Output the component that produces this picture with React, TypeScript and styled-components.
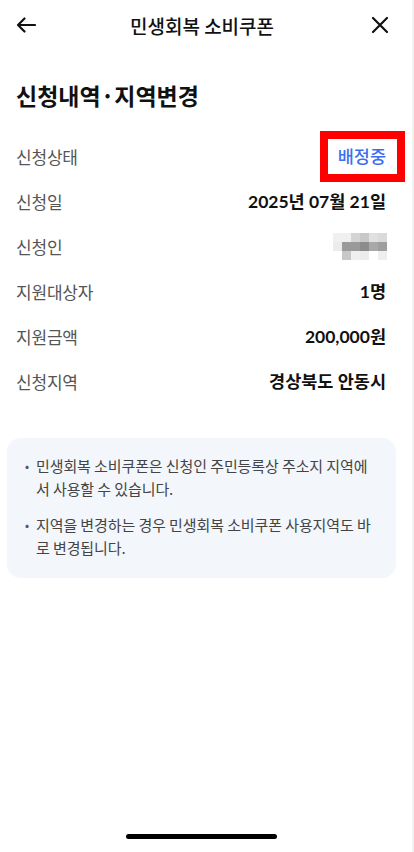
import styled, { createGlobalStyle } from 'styled-components';

const GlobalStyle = createGlobalStyle`
  html, body {
    margin: 0;
    padding: 0;
    background: #fff;
  }
  body {
    font-family: Lato, "Noto Sans CJK KR", sans-serif;
    color: #111;
  }
`;

const rows = [
  { label: '신청상태', value: '배정중', status: true },
  { label: '신청일', value: '2025년 07월 21일' },
  { label: '신청인', value: '', masked: true },
  { label: '지원대상자', value: '1명' },
  { label: '지원금액', value: '200,000원' },
  { label: '신청지역', value: '경상북도 안동시' },
];

const mosaic = [
  ['#f0f0f0', '#f0f0f0', '#d4d4d4', '#c8c8c8', '#e0e0e0', '#dadada'],
  ['#ececec', '#9a9a9a', '#9a9a9a', '#8c8c8c', '#a8a8a8', '#9e9e9e'],
  ['#ffffff', '#c8c8c8', '#f0f0f0', '#ececec', '#ffffff', '#eeeeee'],
];

const notices = [
  '민생회복 소비쿠폰은 신청인 주민등록상 주소지 지역에서 사용할 수 있습니다.',
  '지역을 변경하는 경우 민생회복 소비쿠폰 사용지역도 바로 변경됩니다.',
];

export default function App() {
  return (
    <Page>
      <GlobalStyle />
      <Header>
        <IconButton aria-label="뒤로">
          <svg width="20" height="16" viewBox="0 0 20 16" fill="none">
            <path d="M19 8H2M8.5 1.5L2 8l6.5 6.5" stroke="#111" strokeWidth="2.2" strokeLinecap="round" strokeLinejoin="round" />
          </svg>
        </IconButton>
        <Title>민생회복 소비쿠폰</Title>
        <IconButton aria-label="닫기">
          <svg width="18" height="18" viewBox="0 0 18 18" fill="none">
            <path d="M2 2l14 14M16 2L2 16" stroke="#111" strokeWidth="2.2" strokeLinecap="round" />
          </svg>
        </IconButton>
      </Header>

      <Heading>신청내역·지역변경</Heading>

      <List>
        {rows.map((r) => (
          <Row key={r.label}>
            <Label>{r.label}</Label>
            {r.status ? (
              <Status>{r.value}</Status>
            ) : r.masked ? (
              <Mosaic>
                {mosaic.flat().map((c, i) => (
                  <Cell key={i} $c={c} />
                ))}
              </Mosaic>
            ) : (
              <Value>{r.value}</Value>
            )}
          </Row>
        ))}
      </List>

      <NoticeBox>
        {notices.map((n) => (
          <Notice key={n}>{n}</Notice>
        ))}
      </NoticeBox>

      <HomeBar />
    </Page>
  );
}

const Page = styled.div`
  display: flex;
  flex-direction: column;
  min-height: 100vh;
  box-sizing: border-box;
  border-right: 2px solid #f2f2f2;
`;

const Header = styled.header`
  height: 50px;
  display: flex;
  align-items: center;
  justify-content: space-between;
  padding: 0 21px 0 15px;
`;

const IconButton = styled.button`
  border: 0;
  background: none;
  padding: 0;
  width: 22px;
  height: 22px;
  display: flex;
  align-items: center;
  justify-content: center;
`;

const Title = styled.h1`
  margin: 0 0 0 -2px;
  font-family: "Noto Sans CJK KR", sans-serif;
  font-size: 19px;
  font-weight: 500;
`;

const Heading = styled.h2`
  margin: 30px 0 0;
  padding: 0 16px;
  line-height: 30px;
  font-family: "Noto Sans CJK KR", sans-serif;
  font-size: 23px;
  font-weight: 700;
`;

const List = styled.div`
  margin-top: 24px;
  padding: 0 26px 0 16px;
`;

const Row = styled.div`
  height: 45px;
  display: flex;
  align-items: center;
  justify-content: space-between;
`;

const Label = styled.span`
  font-family: "Noto Sans CJK KR", sans-serif;
  font-size: 17px;
  color: #555;
  letter-spacing: -0.2px;
`;

const Value = styled.span`
  font-family: Lato, "Noto Sans CJK KR", sans-serif;
  font-size: 17.5px;
  line-height: 21px;
  font-weight: 700;
  color: #111;
`;

const Status = styled(Value)`
  position: relative;
  color: #3d6ef2;
  font-weight: 500;

  &::after {
    content: '';
    position: absolute;
    top: -15px;
    bottom: -15px;
    left: -18px;
    right: -19px;
    border: 8px solid #f00;
  }
`;

const Mosaic = styled.div`
  display: grid;
  grid-template-columns: repeat(6, 9px);
  grid-auto-rows: 9px;
  margin-right: -1px;
`;

const Cell = styled.span<{ $c: string }>`
  background: ${(p) => p.$c};
`;

const NoticeBox = styled.div`
  margin: 34px 16px 0 7px;
  padding: 16px 20px 19px 18px;
  background: #f3f6fb;
  border-radius: 14px;
  display: flex;
  flex-direction: column;
  gap: 13px;
`;

const Notice = styled.p`
  margin: 0;
  position: relative;
  padding-left: 11px;
  font-family: "Noto Sans CJK KR", sans-serif;
  font-size: 15px;
  line-height: 23px;
  color: #444;
  letter-spacing: -0.1px;
  word-break: break-all;

  &::before {
    content: '•';
    position: absolute;
    left: 0;
    top: 0;
    font-size: 12px;
    color: #555;
  }
`;

const HomeBar = styled.div`
  margin: auto 0 13px 126px;
  width: 151px;
  height: 5px;
  border-radius: 3px;
  background: #000;
`;
